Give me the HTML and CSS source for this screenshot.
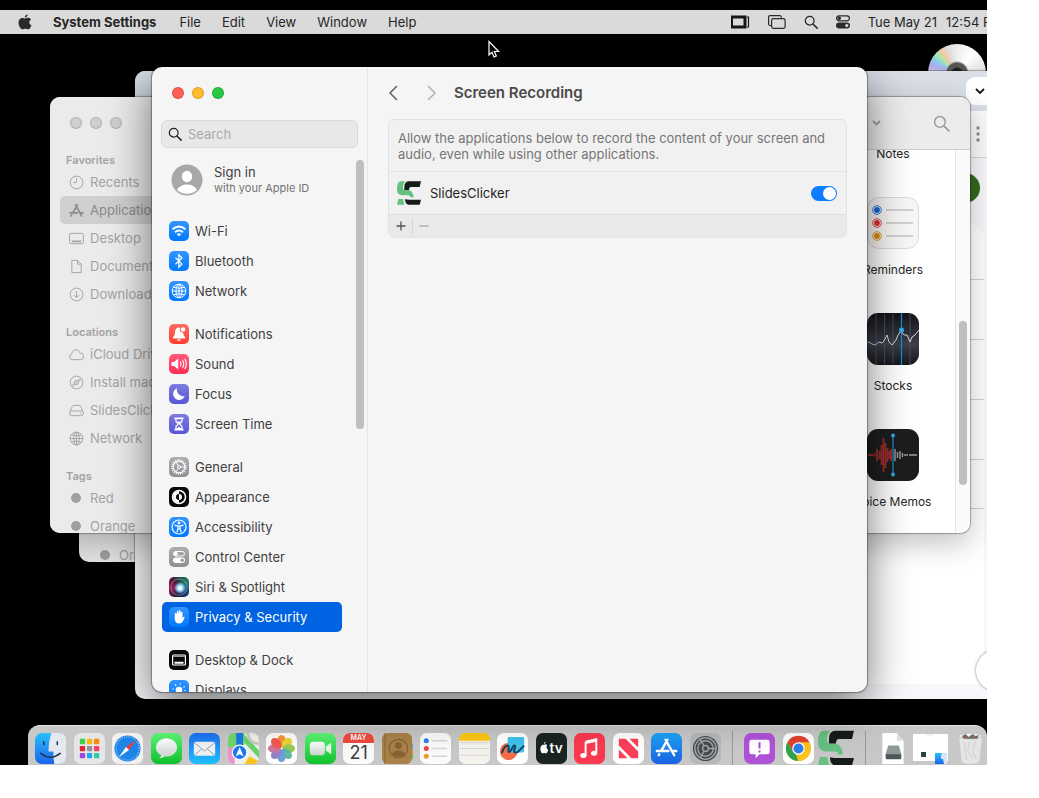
FILE: index.html
```html
<!DOCTYPE html>
<html lang="en">
<head>
  <meta charset="UTF-8" />
  <meta name="viewport" content="width=device-width, initial-scale=1.0"/>
  <title>System Settings</title>
  <link rel="stylesheet" href="styles.css">
</head>
<body>
  <!-- shared icons and gradients -->
  <svg class="defs" width="0" height="0" aria-hidden="true">
    <defs>
      <linearGradient id="g-silver" x1="0" y1="0" x2="0" y2="1"><stop offset="0" stop-color="#ffffff"/><stop offset="1" stop-color="#c9d4cd"/></linearGradient>
      <linearGradient id="g-stocks" x1="0" y1="0" x2="0" y2="1"><stop offset="0" stop-color="#121418"/><stop offset=".6" stop-color="#3d3f4b"/><stop offset="1" stop-color="#15161a"/></linearGradient>
      <linearGradient id="g-finder" x1="0" y1="0" x2="0" y2="1"><stop offset="0" stop-color="#27c0fb"/><stop offset="1" stop-color="#1d63ee"/></linearGradient>
      <linearGradient id="g-green" x1="0" y1="0" x2="0" y2="1"><stop offset="0" stop-color="#5df777"/><stop offset="1" stop-color="#0fbf2c"/></linearGradient>
      <linearGradient id="g-blue" x1="0" y1="0" x2="0" y2="1"><stop offset="0" stop-color="#1ba4f8"/><stop offset="1" stop-color="#1c62e2"/></linearGradient>
      <linearGradient id="g-mail" x1="0" y1="0" x2="0" y2="1"><stop offset="0" stop-color="#1e6ef3"/><stop offset="1" stop-color="#1fc0fb"/></linearGradient>
      <symbol id="search" viewBox="0 0 16 16"><circle cx="6.5" cy="6.5" r="5" fill="none" stroke="currentColor" stroke-width="1.4"/><path d="M10.2 10.2 15 15" stroke="currentColor" stroke-width="1.7" stroke-linecap="round"/></symbol>
      <symbol id="globe" viewBox="0 0 16 16"><g fill="none" stroke="currentColor"><circle cx="8" cy="8" r="6.8"/><ellipse cx="8" cy="8" rx="3" ry="6.8"/><path d="M8 1v14M1 8h14M2.5 4.200q5.500 2.200 11 0M2.500 11.800q5.500-2.200 11 0"/></g></symbol>
      <symbol id="slides" viewBox="0 0 36 35"><path fill="#66c080" d="M5 0h7q-3 4-3 8 0 5 3 5h6q6 2 7 11h-5q0-3-3-3H7q-7-1-7-9Q0 1 5 0zM2 26.500h7l2 8.500H0z"/><path fill="#151b19" d="M17 0h19l-2 8.500H21q-3 0-3 4.500h-7V8q0-7 6-8zM12 26.500q1 1 8 1h16L34 35H17q-5-1-5-8.500z"/></symbol>
      <symbol id="appstore" viewBox="0 0 16 16"><g fill="none" stroke="currentColor" stroke-width="1.7" stroke-linecap="round"><path d="M7 2l6.500 12M9 2 4 10.500M2.800 12.600 2 14M1 10.500h8M12 10.500h3"/></g></symbol>
    </defs>
  </svg>

  <div class="desktop">
    <header class="menubar">
      <nav class="menus">
        <button class="apple" aria-label="Apple menu"><svg width="14" height="16" viewBox="0 0 14 16"><path fill="#2a2a2a" d="M9.600.4c.1 1.600-1.300 3-2.800 3C6.700 1.800 8.100.5 9.600.4zM7.200 4.500c.7 0 1.500-.7 2.800-.7 1.300 0 2.400.7 3 1.600-2.500 1.500-2 4.800.5 5.800-.6 1.700-1.900 4.100-3.400 4.100-1 0-1.400-.6-2.700-.6s-1.700.6-2.700.6C2.700 15.300.5 11.800.5 8.700c0-3 1.900-4.700 3.800-4.700 1.300 0 2.200.5 2.900.5z"/></svg></button>
        <button class="app-name">System Settings</button>
        <button>File</button>
        <button>Edit</button>
        <button>View</button>
        <button>Window</button>
        <button>Help</button>
      </nav>
      <div class="status">
        <svg width="19" height="14" viewBox="0 0 19 14"><path fill="#151515" fill-rule="evenodd" d="M0 .5h14v13H0zM2 3.500v7h10.500v-7z"/><path fill="#151515" d="M14 .5h1.500v13H14z"/><path d="M16 2h1.500v10H16" fill="none" stroke="#151515" stroke-width="1.200"/></svg>
        <svg width="18" height="14" viewBox="0 0 18 14" fill="none" stroke="#2a2a2a" stroke-width="1.200"><path d="M3 10.500H2Q.6 10.500.6 9V2Q.6.6 2 .6h10q1.400 0 1.500 2"/><rect x="3.600" y="3.600" width="13.500" height="9.700" rx="1.800"/></svg>
        <svg width="14" height="14"><use href="#search"/></svg>
        <svg width="14" height="14" viewBox="0 0 14 14"><rect x=".6" y=".8" width="12.800" height="5" rx="2.500" fill="none" stroke="#2a2a2a" stroke-width="1.200"/><circle cx="3.300" cy="3.300" r="1.700" fill="#2a2a2a"/><rect y="7.500" width="14" height="6" rx="3" fill="#2a2a2a"/><circle cx="10.800" cy="10.500" r="1.600" fill="#dadada"/></svg>
        <time><span>Tue May 21</span><span>12:54 PM</span></time>
      </div>
    </header>

    <main class="space">
      <div class="disc"></div>

      <!-- finder window at the very back -->
      <section class="window finder-back">
        <ul class="places"><li><span class="tag"></span>Orange</li></ul>
      </section>

      <!-- browser -->
      <section class="window browser">
        <div class="tabstrip"><button class="tab-search" aria-label="Search tabs"><svg width="10" height="6" viewBox="0 0 10 6"><path d="M1 1l4 4 4-4" fill="none" stroke="#151515" stroke-width="1.800"/></svg></button></div>
        <div class="browser-bar"><svg width="4" height="16" viewBox="0 0 4 16" fill="#8c8c8c"><circle cx="2" cy="2" r="1.700"/><circle cx="2" cy="8" r="1.700"/><circle cx="2" cy="14" r="1.700"/></svg></div>
        <div class="browser-page">
          <div class="avatar-row"><span class="avatar"></span></div>
          <div class="sheet"><hr><hr><hr><hr><hr></div>
          <button class="fab" aria-label="Open"></button>
        </div>
      </section>

      <!-- finder -->
      <section class="window finder">
        <aside class="finder-side">
          <div class="lights idle"><button aria-label="Close"></button><button aria-label="Minimize"></button><button aria-label="Zoom"></button></div>
          <h2>Favorites</h2>
          <ul class="places">
            <li><svg viewBox="0 0 16 16"><circle cx="8" cy="8" r="6.800"/><path d="M8 3.500V8H4.500"/></svg>Recents</li>
            <li class="current"><svg viewBox="0 0 16 16"><use href="#appstore"/></svg>Applications</li>
            <li><svg viewBox="0 0 16 16"><rect x=".6" y="2.500" width="14.800" height="11" rx="1.500"/><path d="M3 11h10" stroke-width="2"/></svg>Desktop</li>
            <li><svg viewBox="0 0 16 16"><path d="M3 1.500h6l4 4v9H3zM9 1.500v4h4"/></svg>Documents</li>
            <li><svg viewBox="0 0 16 16"><circle cx="8" cy="8" r="6.800"/><path d="M8 4v7.500M5 8.500l3 3 3-3"/></svg>Downloads</li>
          </ul>
          <h2>Locations</h2>
          <ul class="places">
            <li><svg viewBox="0 0 16 16"><path d="M4 13.500Q.6 13.500.6 10.500.6 8 3 7.500 3.500 3 7.500 3q3 0 4 3.300 4 0 4 3.700 0 3.500-3.500 3.500z"/></svg>iCloud Drive</li>
            <li><svg viewBox="0 0 16 16"><circle cx="8" cy="8" r="6.800"/><circle cx="8" cy="8" r="2.300"/><circle cx="8" cy="8" r=".6"/><path d="M9.500 6.300 12 3.500M6.500 9.700 4 12.500M10 7l3-2M6 9l-3 2"/></svg>Install macOS</li>
            <li><svg viewBox="0 0 16 16"><path d="M1 9.500 3.500 3.500q.4-1 1.500-1h6q1.100 0 1.500 1L15 9.500"/><rect x=".8" y="8.500" width="14.400" height="5" rx="2"/><path d="M11.500 11h1.500"/></svg>SlidesClicker</li>
            <li><svg viewBox="0 0 16 16"><use href="#globe"/></svg>Network</li>
          </ul>
          <h2>Tags</h2>
          <ul class="places">
            <li><span class="tag"></span>Red</li>
            <li><span class="tag"></span>Orange</li>
          </ul>
        </aside>
        <div class="finder-main">
          <div class="finder-bar">
            <svg width="9" height="6" viewBox="0 0 9 6"><path d="M1 1l3.500 3.500L8 1" fill="none" stroke="currentColor" stroke-width="1.800"/></svg>
            <svg width="17" height="17"><use href="#search"/></svg>
          </div>
          <div class="finder-body">
            <div class="files">
              <figure class="cut"><figcaption>Notes</figcaption></figure>
              <figure>
                <svg width="52" height="52" viewBox="0 0 52 52"><rect x=".5" y=".5" width="51" height="51" rx="11" fill="#f8f7f6" stroke="#dddbd9"/><g stroke="#c5c5c5" stroke-width="1.400"><path d="M19 13h27M19 26h27M19 39h27"/></g><g fill="none" stroke-width="1"><circle cx="10" cy="13" r="4.300" stroke="#2a7be4"/><circle cx="10" cy="26" r="4.300" stroke="#e64545"/><circle cx="10" cy="39" r="4.300" stroke="#e69b2e"/></g><circle cx="10" cy="13" r="2.900" fill="#1769d4"/><circle cx="10" cy="26" r="2.900" fill="#dc3030"/><circle cx="10" cy="39" r="2.900" fill="#de8a10"/></svg>
                <figcaption>Reminders</figcaption>
              </figure>
              <figure>
                <svg width="52" height="52" viewBox="0 0 52 52"><rect width="52" height="52" rx="11" fill="url(#g-stocks)"/><path d="M9 1v50M17.500 1v50M26 1v50M43 1v50" stroke="#53555c" stroke-width=".8"/><path d="M34.500 0v52" stroke="#178fd0" stroke-width="1.200"/><path d="M0 29c3 0 3 1 5 2 4 2 5-1 7-2l3 1 2-2 3-6 2 7 3 3 4-5 2-5 3-4 3 4 3 0 3 7 2-5 3-2 4-5" fill="none" stroke="#d5d5d5"/><circle cx="34.500" cy="17" r="2.500" fill="#31a7ea"/></svg>
                <figcaption>Stocks</figcaption>
              </figure>
              <figure>
                <svg width="52" height="52" viewBox="0 0 52 52"><rect width="52" height="52" rx="11" fill="#1d1d1d"/><g stroke="#972e2d" stroke-width="1.800"><path d="M1 26h5M7.500 24.500v3M10 20v12M12.500 22v8M14.500 16v20M16.500 9v34M18.500 14v25M20.500 19v14M22.500 22v8M24 20v12"/></g><g stroke="#9d9d9d" stroke-width="1.400"><path d="M28 20v12M30.500 23v6M33 22v8M35.500 24v4M38 25v2M40 25v2M42 26h8"/></g><path d="M26 6v39" stroke="#1c7ab0" stroke-width="1.500"/><circle cx="26" cy="6.500" r="1.900" fill="#31a7ea"/><circle cx="26" cy="45.500" r="1.900" fill="#31a7ea"/></svg>
                <figcaption>Voice Memos</figcaption>
              </figure>
            </div>
            <div class="track"><span class="thumb"></span></div>
          </div>
        </div>
      </section>

      <!-- system settings -->
      <section class="window settings">
        <aside class="side">
          <div class="lights"><button class="red" aria-label="Close"></button><button class="yellow" aria-label="Minimize"></button><button class="green" aria-label="Zoom"></button></div>
          <label class="search"><svg width="14" height="14"><use href="#search"/></svg><input type="search" placeholder="Search" aria-label="Search"></label>
          <div class="side-scroll">
            <a class="account" href="#">
              <svg width="32" height="32" viewBox="0 0 32 32"><circle cx="16" cy="16" r="15.500" fill="#a8a8a8"/><ellipse cx="16" cy="12.500" rx="5.200" ry="5.800" fill="#fff"/><path d="M6 26q3-5.500 10-5.500T26 26q-4 3.700-10 3.700T6 26z" fill="#fff"/></svg>
              <span><b>Sign in</b><small>with your Apple ID</small></span>
            </a>
            <nav>
              <div class="group">
                <a href="#"><span class="ico blue"><svg viewBox="0 0 20 20"><g fill="none" stroke="#fff" stroke-width="1.900"><path d="M3.500 8.300q6.500-5.600 13 0M6 11.200q4-3.400 8 0"/></g><path d="M10 15.500 7.700 13q2.300-1.700 4.600 0z" fill="#fff"/></svg></span>Wi-Fi</a>
                <a href="#"><span class="ico blue"><svg viewBox="0 0 20 20"><path d="M6.500 6.800 13 13l-3.200 3.200V3.800L13 7l-6.500 6.200" fill="none" stroke="#fff" stroke-width="1.200"/></svg></span>Bluetooth</a>
                <a href="#"><span class="ico blue"><svg class="inner" viewBox="0 0 16 16"><use href="#globe"/></svg></span>Network</a>
              </div>
              <div class="group">
                <a href="#"><span class="ico coral"><svg viewBox="0 0 20 20"><path d="M9.500 3.500q1.200 0 1.500 1-1 3.500 3.200 4.500 0 2.500 2 4.500v1H4v-1q2-2 2-5 0-4.500 3.500-5zM8 15.500h4q-.5 1.500-2 1.500t-2-1.500z" fill="#fff"/><circle cx="14" cy="5.500" r="2.200" fill="#fff"/></svg></span>Notifications</a>
                <a href="#"><span class="ico pink"><svg viewBox="0 0 20 20"><path d="M2.500 8h2.700l4-3.500v11L5.200 12H2.500z" fill="#fff"/><path d="M11.300 7.500q1.600 2.500 0 5M13.500 6.200q2.600 3.800 0 7.600M15.600 4.800q3.600 5.200 0 10.400" fill="none" stroke="#fff" stroke-width="1.100"/></svg></span>Sound</a>
                <a href="#"><span class="ico indigo"><svg viewBox="0 0 20 20"><path d="M8 4.300A6 6 0 1 0 15.800 12 6.500 6.500 0 0 1 8 4.300z" fill="#fff"/></svg></span>Focus</a>
                <a href="#"><span class="ico indigo"><svg viewBox="0 0 20 20"><path d="M5.500 3.500h9v1.800h-9zM5.500 14.700h9v1.800h-9z" fill="#fff"/><path d="M7 5v2.500l2.300 2.500L7 12.500V15h6v-2.500L10.700 10 13 7.500V5" fill="none" stroke="#fff" stroke-width="1.200"/><path d="M8 7.500h4L10 10zM7.500 15l2.500-2.500 2.500 2.500z" fill="#fff"/></svg></span>Screen Time</a>
              </div>
              <div class="group">
                <a href="#"><span class="ico gray"><svg viewBox="0 0 20 20"><g fill="none" stroke="#fff"><circle cx="10" cy="10" r="7" stroke-width="1.500" stroke-dasharray="1.100 1.100"/><circle cx="10" cy="10" r="5.800" stroke-width="1.200"/><circle cx="10" cy="10" r="1.500"/><path d="M11.500 10h4M9.300 8.700l-2-3.500M9.300 11.300l-2 3.500"/></g></svg></span>General</a>
                <a href="#"><span class="ico black"><svg viewBox="0 0 20 20"><circle cx="10" cy="10" r="6.500" fill="none" stroke="#fff" stroke-width="1.500"/><path d="M10 4v3a3 3 0 0 0 0 6v3a6 6 0 0 1 0-12zM10 7a3 3 0 0 1 0 6z" fill="#fff"/></svg></span>Appearance</a>
                <a href="#"><span class="ico blue"><svg viewBox="0 0 20 20"><circle cx="10" cy="10" r="7" fill="none" stroke="#fff" stroke-width="1.200"/><circle cx="10" cy="6" r="1.400" fill="#fff"/><path d="M6 8.300l3 .7v2.500L8 15M14 8.300l-3 .7v2.500l1 3.500M9 9h2v3H9z" fill="none" stroke="#fff" stroke-width="1.200" stroke-linecap="round"/></svg></span>Accessibility</a>
                <a href="#"><span class="ico gray"><svg viewBox="0 0 20 20"><rect x="4.500" y="4.500" width="11" height="4.500" rx="2.200" fill="none" stroke="#fff"/><circle cx="6.800" cy="6.800" r="2" fill="#fff"/><rect x="4" y="10.500" width="12" height="5.500" rx="2.700" fill="#fff"/><circle cx="13.200" cy="13.200" r="1.700" fill="#9a9a9e"/></svg></span>Control Center</a>
                <a href="#"><span class="ico siri"></span>Siri &amp; Spotlight</a>
                <a href="#" class="selected"><span class="ico blue"><svg viewBox="0 0 20 20"><path d="M5.800 7v5q.3 4.500 4.500 4.500 2.800 0 4-3l1.400-3.500q-1.200-.8-2 .8l-.4.7V5" fill="#fff"/><path d="M6.700 6.500V12M8.700 4.500V12M10.700 4V12M12.500 5.500V12" stroke="#fff" stroke-width="1.500" stroke-linecap="round"/></svg></span>Privacy &amp; Security</a>
              </div>
              <div class="group">
                <a href="#"><span class="ico black"><svg viewBox="0 0 20 20"><rect x="3.600" y="5" width="12.800" height="10" rx="1" fill="none" stroke="#fff" stroke-width="1.200"/><path d="M4 6.300h12" stroke="#999" stroke-width="1.500"/><path d="M5.500 12.800h9" stroke="#fff" stroke-width="2"/></svg></span>Desktop &amp; Dock</a>
                <a href="#"><span class="ico blue"><svg viewBox="0 0 20 20"><circle cx="10" cy="10" r="3.300" fill="#fff"/><circle cx="10" cy="10" r="6" fill="none" stroke="#fff" stroke-width="1.500" stroke-dasharray="1 3.710"/></svg></span>Displays</a>
              </div>
            </nav>
            <span class="thumb"></span>
          </div>
        </aside>
        <div class="pane">
          <div class="pane-head">
            <button aria-label="Back"><svg width="10" height="16" viewBox="0 0 10 16"><path d="M8.500 1.500 2 8l6.500 6.500" fill="none" stroke="#606060" stroke-width="1.500" stroke-linecap="round"/></svg></button>
            <button aria-label="Forward" disabled><svg width="10" height="16" viewBox="0 0 10 16"><path d="M1.500 1.500 8 8l-6.500 6.500" fill="none" stroke="#b2b2b2" stroke-width="1.500" stroke-linecap="round"/></svg></button>
            <h1>Screen Recording</h1>
          </div>
          <div class="card">
            <p>Allow the applications below to record the content of your screen and audio, even while using other applications.</p>
            <div class="app-row">
              <svg width="24" height="24"><use href="#slides"/></svg>
              <label for="slides-toggle">SlidesClicker</label>
              <input type="checkbox" id="slides-toggle" class="toggle" checked>
            </div>
            <div class="card-foot">
              <button aria-label="Add"><svg width="10" height="10" viewBox="0 0 10 10"><path d="M5 .5v9M.5 5h9" stroke="#555" stroke-width="1.300"/></svg></button>
              <button aria-label="Remove" disabled><svg width="10" height="10" viewBox="0 0 10 10"><path d="M.5 5h9" stroke="#b0b0b0" stroke-width="1.300"/></svg></button>
            </div>
          </div>
        </div>
      </section>

      <svg class="cursor" width="12" height="19" viewBox="0 0 12 19"><path d="M1 1.500V15l3-2.700 2 4.700 2.300-1L6.400 11.500h4.200z" fill="#000" stroke="#fff" stroke-width="1.200"/></svg>
    </main>

    <footer class="dock">
      <div class="dock-apps">
        <svg viewBox="0 0 32 32"><rect width="32" height="32" rx="7" fill="url(#g-finder)"/><path d="M17 0h8q7 0 7 7v18q0 7-7 7h-5q-1-5-1-13h-5Q14 8 17 0z" fill="#e4e9f0"/><path d="M9 9v3M23 9v3M6 21q10 8 20 0" stroke="#24344c" stroke-width="1.500" fill="none" stroke-linecap="round"/></svg>
        <svg viewBox="0 0 32 32"><rect width="32" height="32" rx="7" fill="#e6e6e8"/><g><rect x="6" y="6" width="5.500" height="5.500" rx="1" fill="#3ed14a"/><rect x="13.300" y="6" width="5.500" height="5.500" rx="1" fill="#f9b90c"/><rect x="20.600" y="6" width="5.500" height="5.500" rx="1" fill="#f78b12"/><rect x="6" y="13.300" width="5.500" height="5.500" rx="1" fill="#da2536"/><rect x="13.300" y="13.300" width="5.500" height="5.500" rx="1" fill="#8e9499"/><rect x="20.600" y="13.300" width="5.500" height="5.500" rx="1" fill="#fa3e62"/><rect x="6" y="20.600" width="5.500" height="5.500" rx="1" fill="#a146d6"/><rect x="13.300" y="20.600" width="5.500" height="5.500" rx="1" fill="#1da7f5"/><rect x="20.600" y="20.600" width="5.500" height="5.500" rx="1" fill="#32caa4"/></g></svg>
        <svg viewBox="0 0 32 32"><rect width="32" height="32" rx="7" fill="#f1f1f2"/><circle cx="16" cy="16" r="13.500" fill="#1d85e8"/><circle cx="16" cy="16" r="12" fill="none" stroke="#d9efff" stroke-width="1.500" stroke-dasharray=".5 1.600"/><path d="M25 7 17.500 17.500l-3-3z" fill="#ee3d36"/><path d="M7 25l7.500-10.500 3 3z" fill="#fff"/></svg>
        <svg viewBox="0 0 32 32"><rect width="32" height="32" rx="7" fill="url(#g-green)"/><ellipse cx="16" cy="15" rx="11" ry="9.500" fill="url(#g-silver)"/><path d="M11 22q0 2.500-2.500 4 4 .2 6-2.500z" fill="#dce9df"/></svg>
        <svg viewBox="0 0 32 32"><rect width="32" height="32" rx="7" fill="url(#g-mail)"/><rect x="5" y="9" width="22" height="14.500" rx="2" fill="#eef1f3"/><path d="M5.500 10 16 18.500 26.500 10M5.500 23l7.500-6.500M26.500 23 19 16.500" fill="none" stroke="#97a0a6"/></svg>
        <svg viewBox="0 0 32 32"><rect width="32" height="32" rx="7" fill="#eeefe9"/><path d="M7 0h10v12L2 17 0 14V7q0-7 7-7z" fill="#72d76c"/><path d="M15 0l17 18v8L16 9z" fill="#69d36c"/><path d="M0 15h7v17Q0 32 0 25z" fill="#ee91d3"/><path d="M17 32l5-8 9 5q-2 3-6 3z" fill="#fac316"/><path d="M20 0q2 11 12 11" fill="none" stroke="#c5cbc6" stroke-width="3"/><path d="M8.500 0h7v20h-7z" fill="#1c79e6"/><circle cx="12" cy="20" r="7.500" fill="#1e78ed" stroke="#fff" stroke-width="1.200"/><path d="M12 14.500 16 24l-4-2-4 2z" fill="#fff"/></svg>
        <svg viewBox="0 0 32 32"><rect width="32" height="32" rx="7" fill="#fdfdfd"/><g opacity=".9"><ellipse cx="16" cy="8.500" rx="4.500" ry="6.500" fill="#f58b1d"/><ellipse cx="16" cy="8.500" rx="4.500" ry="6.500" fill="#e8cf1b" transform="rotate(45 16 16)"/><ellipse cx="16" cy="8.500" rx="4.500" ry="6.500" fill="#8dc63f" transform="rotate(90 16 16)"/><ellipse cx="16" cy="8.500" rx="4.500" ry="6.500" fill="#52b38e" transform="rotate(135 16 16)"/><ellipse cx="16" cy="8.500" rx="4.500" ry="6.500" fill="#5799d6" transform="rotate(180 16 16)"/><ellipse cx="16" cy="8.500" rx="4.500" ry="6.500" fill="#8975c1" transform="rotate(225 16 16)"/><ellipse cx="16" cy="8.500" rx="4.500" ry="6.500" fill="#c9679a" transform="rotate(270 16 16)"/><ellipse cx="16" cy="8.500" rx="4.500" ry="6.500" fill="#f2473d" transform="rotate(315 16 16)"/></g></svg>
        <svg viewBox="0 0 32 32"><rect width="32" height="32" rx="7" fill="url(#g-green)"/><rect x="5" y="9" width="15.500" height="14" rx="3.500" fill="url(#g-silver)"/><path d="M21.500 14l5.500-4v12l-5.500-4z" fill="#e8f3ea"/></svg>
        <div class="calendar"><span>MAY</span><b>21</b></div>
        <svg viewBox="0 0 32 32"><path d="M28 11h4v6h-4z" fill="#45aee8"/><path d="M28 17h4v5h-4z" fill="#ef9430"/><path d="M28 22h4v5h-4z" fill="#60c76b"/><rect width="31" height="32" rx="6" fill="#aa8149"/><path d="M3 0v32" stroke="#8c6634"/><circle cx="17" cy="16" r="9.500" fill="none" stroke="#866233" stroke-width="1.200"/><circle cx="17" cy="13" r="3.500" fill="#866233"/><path d="M10 22q2-4 7-4t7 4q-7 5-14 0z" fill="#866233"/></svg>
        <svg viewBox="0 0 32 32"><rect width="32" height="32" rx="7" fill="#fbfafa"/><path d="M12 8h16M12 16h16M12 24h16" stroke="#d6d6d6" stroke-width="1.500"/><circle cx="6.500" cy="8" r="2.600" fill="#247fee"/><circle cx="6.500" cy="16" r="2.600" fill="#ef4444"/><circle cx="6.500" cy="24" r="2.600" fill="#f19b2a"/></svg>
        <svg viewBox="0 0 32 32"><rect width="32" height="32" rx="7" fill="#f5f3ed"/><path d="M0 8V7q0-7 7-7h18q7 0 7 7v1z" fill="#fdc713"/><path d="M1 10h30M1 16h30M1 23h30" stroke="#d8d6d0"/></svg>
        <svg viewBox="0 0 32 32"><rect width="32" height="32" rx="7" fill="#fff"/><circle cx="12" cy="19" r="9" fill="#f86b47"/><rect x="11" y="4" width="17" height="16" rx="1.500" fill="#3fc3ec"/><path d="M5 21c2-8 8-11 7-5-1 5 1 5 4-1 2-4 4-2 2 2s3 4 5 1l5-5" fill="none" stroke="#154060" stroke-width="2"/></svg>
        <svg viewBox="0 0 32 32"><rect width="32" height="32" rx="7" fill="#1a2422"/><path d="M8.500 12q1.500-1 2.800 0-1.200 4 1.500 5.500-1.500 4-3 3.500-1.300-.6-2.500 0C4.500 21.500 3 13 7 12zM8.200 11.300Q8 9.500 10 9q0 2-1.800 2.300z" fill="#fff"/><text x="14" y="21" fill="#fff" class="tv">tv</text></svg>
        <svg viewBox="0 0 32 32"><rect width="32" height="32" rx="7" fill="#fb3a50"/><path d="M12 9l11-2.500v14" fill="none" stroke="#fff" stroke-width="2"/><path d="M12 9v14M12 10.500 23 8" stroke="#fff" stroke-width="2"/><ellipse cx="9.700" cy="23.300" rx="3.200" ry="2.600" fill="#fff"/><ellipse cx="20.700" cy="20.800" rx="3.200" ry="2.600" fill="#fff"/></svg>
        <svg viewBox="0 0 32 32"><rect width="32" height="32" rx="7" fill="#fff"/><path d="M6 6h7l13 13v7h-7L6 13zM17 6h8q1 0 1 1v8zM6 17v8q0 1 1 1h8z" fill="#fb4059"/></svg>
        <svg viewBox="0 0 32 32"><rect width="32" height="32" rx="7" fill="url(#g-blue)"/><g fill="none" stroke="#fff" stroke-width="2.500" stroke-linecap="round"><path d="M15 7l9 16M17 7 10.500 18.500M8.500 22 8 23M6 18.500h12M22 18.500h4"/></g></svg>
        <svg viewBox="0 0 32 32"><rect width="32" height="32" rx="7" fill="#b5b8b9"/><circle cx="16" cy="16" r="13" fill="#474a4c"/><g fill="none" stroke="#9fa3a5" stroke-width="1.500"><circle cx="16" cy="16" r="11"/><circle cx="16" cy="16" r="8"/><circle cx="16" cy="16" r="3"/><path d="M19 16h8M14.500 13.400l-4-7M14.500 18.600l-4 7"/></g></svg>
      </div>
      <span class="divider"></span>
      <svg viewBox="0 0 32 32"><rect width="32" height="32" rx="7" fill="#b052d8"/><path d="M8 7h16q2.500 0 2.500 2.500v10q0 2.500-2.500 2.500h-8l-4 4v-4H8q-2.500 0-2.500-2.500v-10Q5.500 7 8 7z" fill="#fff"/><path d="M16 9.500v6.500M16 18v2" stroke="#aa4bd5" stroke-width="2"/></svg>
      <div class="dock-pair">
        <svg viewBox="0 0 32 32"><rect width="32" height="32" rx="7" fill="#fff"/><circle cx="16" cy="16" r="13" fill="#fcc31d"/><path d="M4.700 9.500A13 13 0 0 1 27.300 9.500H16l-5.700 9.700z" fill="#e34133"/><path d="M4.700 9.500 10.300 19.200 16 22.500 15.500 29A13 13 0 0 1 4.700 9.500z" fill="#31a350"/><path d="M21.700 19.200 15.500 29l-2-7z" fill="#fcc31d"/><circle cx="16" cy="16" r="6.500" fill="#fff"/><circle cx="16" cy="16" r="5.200" fill="#317eea"/></svg>
        <svg class="wide" viewBox="0 0 36 35"><use href="#slides"/></svg>
      </div>
      <span class="divider"></span>
      <div class="dock-files">
        <svg class="doc" viewBox="0 0 24 32"><path d="M1 0h15l7 8v24H1z" fill="#fff"/><path d="M16 0v8h7z" fill="#dedede"/><path d="M7 13h11l3 10H4z" fill="#8e999a"/><rect x="4.500" y="22" width="16" height="5" rx="1" fill="#4e5759"/></svg>
        <svg class="wide" viewBox="0 0 36 32"><path d="M0 2h35v27H0z" fill="#fff"/><path d="M14 3h6" stroke="#dfdfdf"/><path d="M8 20h5v5H8z" fill="#2a4535"/><path d="M22 21h12v11H22z" fill="url(#g-finder)"/><path d="M29 21h5v11h-3l-1-5h-2q0-4 1-6z" fill="#d9e4f3"/></svg>
        <svg class="trash" viewBox="0 0 28 34"><path d="M2 3h24l-3 28q-9 4-18 0z" fill="#e5e5e5"/><ellipse cx="14" cy="4" rx="12" ry="3" fill="#f5f5f5" stroke="#bdbdbd"/><path d="M5 4l4-2 3 3 4-3 3 2 4-1-2 4H7z" fill="#69706d"/><path d="M8 5l3 1M17 3l2 3" stroke="#ba594e" stroke-width="1.500"/><path d="M7 9l3 20M13 10l-2 9 5 8M20 9l-4 10 4 9" fill="none" stroke="#cecece"/></svg>
      </div>
    </footer>
  </div>
</body>
</html>
```
FILE: styles.css
```css
* {
  box-sizing: border-box;
}

body {
  margin: 0;
  padding: 0 52px 33px 0;
  height: 100vh;
  background: #fff;
  font-family: Inter, "Liberation Sans", sans-serif;
  font-size: 13px;
  line-height: 16px;
  color: #404040;
}

button {
  border: none;
  padding: 0;
  background: none;
  font: inherit;
  color: inherit;
}

a {
  color: inherit;
  text-decoration: none;
}

svg {
  display: block;
  flex: none;
}

ul {
  list-style: none;
  margin: 0;
  padding: 0;
}

h1, h2, p, figure {
  margin: 0;
}

.defs {
  position: absolute;
}

.desktop {
  position: relative;
  display: flex;
  flex-direction: column;
  height: 100%;
  padding-top: 10px;
  background: #000;
  overflow: hidden;
}

/* menu bar */
.menubar {
  display: flex;
  justify-content: space-between;
  align-items: center;
  height: 24px;
  padding-left: 18px;
  background: #dadada;
  color: #262626;
  white-space: nowrap;
}

.menus {
  display: flex;
  align-items: center;
  gap: 21px;
}

.app-name {
  padding-right: 2px;
  font-weight: 700;
}

.status {
  display: flex;
  align-items: center;
  gap: 18px;
  margin-right: -16px;
}

.status time {
  display: flex;
  gap: 9px;
}

/* windows */
.space {
  position: relative;
  flex: 1;
}

.window {
  position: absolute;
  border-radius: 10px;
  overflow: hidden;
  box-shadow: 0 0 1px 1px rgba(0, 0, 0, 0.3);
}

.disc {
  position: absolute;
  top: 10px;
  right: 1px;
  width: 58px;
  height: 58px;
  border-radius: 50%;
  background:
    radial-gradient(circle, #222 0 5px, #555 6px 10px, #aaa 11px, transparent 12px),
    conic-gradient(#eee, #fff 40deg, #ddd 90deg, #ccc 270deg, #b0a8e8 285deg, #8fc6ee 298deg, #a5e6b0 312deg, #f2c9a0 325deg, #ddd 340deg, #eee);
}

.lights {
  display: flex;
  gap: 8px;
}

.lights button {
  width: 12px;
  height: 12px;
  border-radius: 50%;
  border: 1px solid rgba(0, 0, 0, 0.15);
}

.lights .red {
  background: #ff5f57;
}

.lights .yellow {
  background: #febc2e;
}

.lights .green {
  background: #28c840;
}

.idle button {
  background: #cfcfcf;
}

.thumb {
  width: 8px;
  border-radius: 4px;
  background: #bfbfbf;
}

/* browser */
.browser {
  top: 37px;
  right: -30px;
  bottom: 26px;
  left: 135px;
  display: flex;
  flex-direction: column;
  background: #f6f8fb;
}

.tabstrip {
  display: flex;
  justify-content: flex-end;
  align-items: center;
  height: 40px;
  padding-right: 23px;
  background: #d9dee7;
}

.tab-search {
  display: grid;
  place-items: center;
  width: 28px;
  height: 28px;
  border-radius: 9px;
  background: #fff;
}

.browser-bar {
  display: flex;
  justify-content: flex-end;
  align-items: center;
  height: 47px;
  padding-right: 37px;
  border-bottom: 1px solid #d5d5d5;
  background: #fafafa;
}

.browser-page {
  position: relative;
  flex: 1;
  display: flex;
  flex-direction: column;
  padding: 15px 33px 15px 60px;
}

.avatar-row {
  display: flex;
  justify-content: flex-end;
  padding-right: 4px;
}

.avatar {
  width: 30px;
  height: 30px;
  border-radius: 50%;
  background: #33691e;
}

.sheet {
  flex: 1;
  margin-top: 20px;
  padding-top: 56px;
  border-radius: 16px 16px 0 0;
  background: #fff;
}

.sheet hr {
  margin: 0 0 59px;
  border: none;
  border-top: 1px solid #d0d2d6;
}

.sheet hr:nth-child(4) {
  margin-bottom: 48px;
}

.fab {
  position: absolute;
  right: 0;
  bottom: 8px;
  width: 41px;
  height: 41px;
  border-radius: 50%;
  background: #fff;
  box-shadow: 0 0 3px rgba(0, 0, 0, 0.5);
}

/* finder */
.finder-back {
  top: 92px;
  right: 500px;
  bottom: 163px;
  left: 79px;
  display: flex;
  flex-direction: column;
  justify-content: flex-end;
  padding-left: 10px;
  background: #e4e4e4;
}

.finder-back .places {
  margin-bottom: -7px;
}

.finder {
  top: 63px;
  right: 17px;
  bottom: 192px;
  left: 50px;
  display: flex;
  background: #fff;
  box-shadow: 0 0 1px 1px rgba(0, 0, 0, 0.3), 0 10px 30px rgba(0, 0, 0, 0.25);
}

.finder-side {
  width: 180px;
  padding: 20px 10px 0;
  background: #ebebeb;
}

.finder-side .lights {
  padding: 0 10px 23px;
}

.finder-side h2 {
  padding-left: 6px;
  font-size: 11px;
  font-weight: 600;
  line-height: 16px;
  color: #a3a3a3;
}

.places + h2 {
  margin-top: 16px;
}

.places li {
  display: flex;
  align-items: center;
  gap: 6px;
  height: 28px;
  padding-left: 9px;
  border-radius: 5px;
  color: #a3a3a3;
  white-space: nowrap;
}

.places svg {
  width: 15px;
  height: 15px;
  fill: none;
  stroke: currentColor;
}

.places .current {
  background: #cfcfcf;
  color: #8a8a8a;
}

.tag {
  width: 10px;
  height: 10px;
  margin: 0 3px 0 2px;
  border-radius: 50%;
  background: #9f9f9f;
}

.finder-main {
  flex: 1;
  display: flex;
  flex-direction: column;
}

.finder-bar {
  display: flex;
  justify-content: flex-end;
  align-items: center;
  gap: 52px;
  height: 53px;
  padding-right: 20px;
  border-bottom: 1px solid #d0d0d0;
  background: #ececec;
  color: #9c9c9c;
}

.finder-body {
  flex: 1;
  display: flex;
  min-height: 0;
}

.files {
  flex: 1;
  display: flex;
  flex-direction: column;
  align-items: flex-end;
  gap: 35px;
  padding-right: 12px;
  overflow: hidden;
}

.files figure {
  display: flex;
  flex-direction: column;
  align-items: center;
  gap: 13px;
  width: 100px;
  font-size: 12px;
  color: #262626;
}

.files .cut {
  margin-top: -4px;
}

.track {
  width: 15px;
  padding: 171px 3px 48px;
  border-left: 1px solid #e5e5e5;
  background: #fafafa;
}

.track .thumb {
  display: block;
  height: 100%;
}

/* system settings */
.settings {
  top: 33px;
  right: 120px;
  bottom: 33px;
  left: 152px;
  display: flex;
  background: #f5f5f5;
  box-shadow: 0 0 1px 1px rgba(0, 0, 0, 0.35), 0 14px 44px rgba(0, 0, 0, 0.55);
}

.side {
  display: flex;
  flex-direction: column;
  width: 216px;
  border-right: 1px solid #e6e6e6;
}

.side .lights {
  padding: 20px 20px 21px;
}

.search {
  display: flex;
  align-items: center;
  gap: 6px;
  height: 28px;
  margin: 0 9px;
  padding: 0 6px;
  border: 1px solid #dadada;
  border-radius: 6px;
  background: #e8e8e8;
}

.search svg {
  color: #222;
}

.search input {
  flex: 1;
  min-width: 0;
  border: none;
  padding: 0;
  background: none;
  font: inherit;
  outline: none;
}

.search input::placeholder {
  color: #a9a9a9;
}

.side-scroll {
  position: relative;
  flex: 1;
  min-height: 0;
  overflow: hidden;
}

.side-scroll .thumb {
  position: absolute;
  top: 12px;
  right: 3px;
  height: 269px;
}

.account {
  display: flex;
  align-items: center;
  gap: 11px;
  height: 64px;
  margin-bottom: 4px;
  padding-left: 19px;
}

.account b,
.account small {
  display: block;
  font-weight: 400;
}

.account small {
  font-size: 11px;
  color: #737373;
}

.group {
  margin-bottom: 13px;
  padding: 0 25px 0 10px;
}

.group a {
  display: flex;
  align-items: center;
  gap: 6px;
  height: 30px;
  padding-left: 7px;
  border-radius: 5px;
}

.group .selected {
  background: #0063e1;
  color: #fff;
}

.ico {
  display: grid;
  place-items: center;
  width: 20px;
  height: 20px;
  border-radius: 5px;
  color: #fff;
}

.ico svg {
  width: 20px;
  height: 20px;
}

.ico .inner {
  width: 16px;
  height: 16px;
}

.blue {
  background: linear-gradient(#3395ff, #007aff);
}

.coral {
  background: linear-gradient(#ff6d62, #ff3b30);
}

.pink {
  background: linear-gradient(#ff5c7d, #ff2d55);
}

.indigo {
  background: linear-gradient(#7d7be0, #5856d6);
}

.gray {
  background: linear-gradient(#adadb1, #8e8e93);
}

.black {
  background: #080808;
}

.siri {
  background:
    radial-gradient(circle at 11px 11px, #fff 0 1px, #8fd8f5 3px, transparent 6px),
    radial-gradient(circle, transparent 7px, rgba(150, 160, 170, 0.6) 8px, transparent 9px),
    conic-gradient(#1c4b49, #237a6b 60deg, #173e78 130deg, #1b1a42 190deg, #9c1f52 260deg, #511434 320deg, #1c4b49);
}

.pane {
  flex: 1;
  padding: 0 20px;
}

.pane-head {
  display: flex;
  align-items: center;
  gap: 29px;
  height: 52px;
}

.pane-head h1 {
  margin-left: -12px;
  font-size: 15px;
  font-weight: 600;
  line-height: 20px;
  color: #4a4a4a;
}

.card {
  border: 1px solid #e2e2e2;
  border-radius: 6px;
  background: #f1f1f1;
  overflow: hidden;
}

.card p {
  padding: 10px 9px 9px;
  color: #767676;
}

.app-row {
  display: flex;
  align-items: center;
  gap: 9px;
  height: 43px;
  padding: 0 9px 0 8px;
  border-top: 1px solid #e4e4e4;
  color: #1f1f1f;
}

.toggle {
  appearance: none;
  display: flex;
  justify-content: flex-end;
  width: 26px;
  height: 15px;
  margin: 0 0 0 auto;
  padding: 1px;
  border-radius: 8px;
  background: #0f7dff;
}

.toggle::before {
  content: "";
  width: 13px;
  height: 13px;
  border-radius: 50%;
  background: #fff;
}

.toggle:not(:checked) {
  justify-content: flex-start;
  background: #c8c8c8;
}

.card-foot {
  display: flex;
  align-items: center;
  height: 23px;
  border-top: 1px solid #dfdfdf;
  background: #e9e9e9;
}

.card-foot button {
  display: grid;
  place-items: center;
  width: 23px;
  height: 16px;
}

.card-foot button + button {
  border-left: 1px solid #d6d6d6;
}

.cursor {
  position: absolute;
  top: 6px;
  left: 488px;
}

/* dock */
.dock {
  display: flex;
  align-items: center;
  height: 40px;
  gap: 8px;
  margin-left: 28px;
  padding: 5px 3px 0 7px;
  border-top: 1px solid #e6e6e6;
  border-radius: 12px 12px 0 0;
  background: #c8c8c8;
}

.dock-apps {
  flex: 1;
  display: flex;
  justify-content: space-between;
}

.dock-pair {
  display: flex;
  align-items: center;
  gap: 4px;
}

.dock-files {
  display: flex;
  align-items: center;
  gap: 8px;
  padding-left: 4px;
}

.dock svg {
  width: 31px;
  height: 31px;
}

.dock .wide {
  width: 36px;
  height: 36px;
}

.dock .doc {
  width: 24px;
}

.dock .trash {
  width: 27px;
  height: 33px;
}

.divider {
  width: 1px;
  height: 34px;
  margin: 0 3px;
  background: #999;
}

.tv {
  font-size: 14px;
  font-weight: 600;
}

.calendar {
  display: flex;
  flex-direction: column;
  align-items: center;
  width: 31px;
  height: 31px;
  border-radius: 7px;
  background: #fafafa;
  overflow: hidden;
}

.calendar span {
  width: 100%;
  background: #f0483f;
  color: #fff;
  font-size: 7px;
  font-weight: 600;
  line-height: 10px;
  text-align: center;
}

.calendar b {
  font-size: 18px;
  font-weight: 400;
  line-height: 20px;
}
```
